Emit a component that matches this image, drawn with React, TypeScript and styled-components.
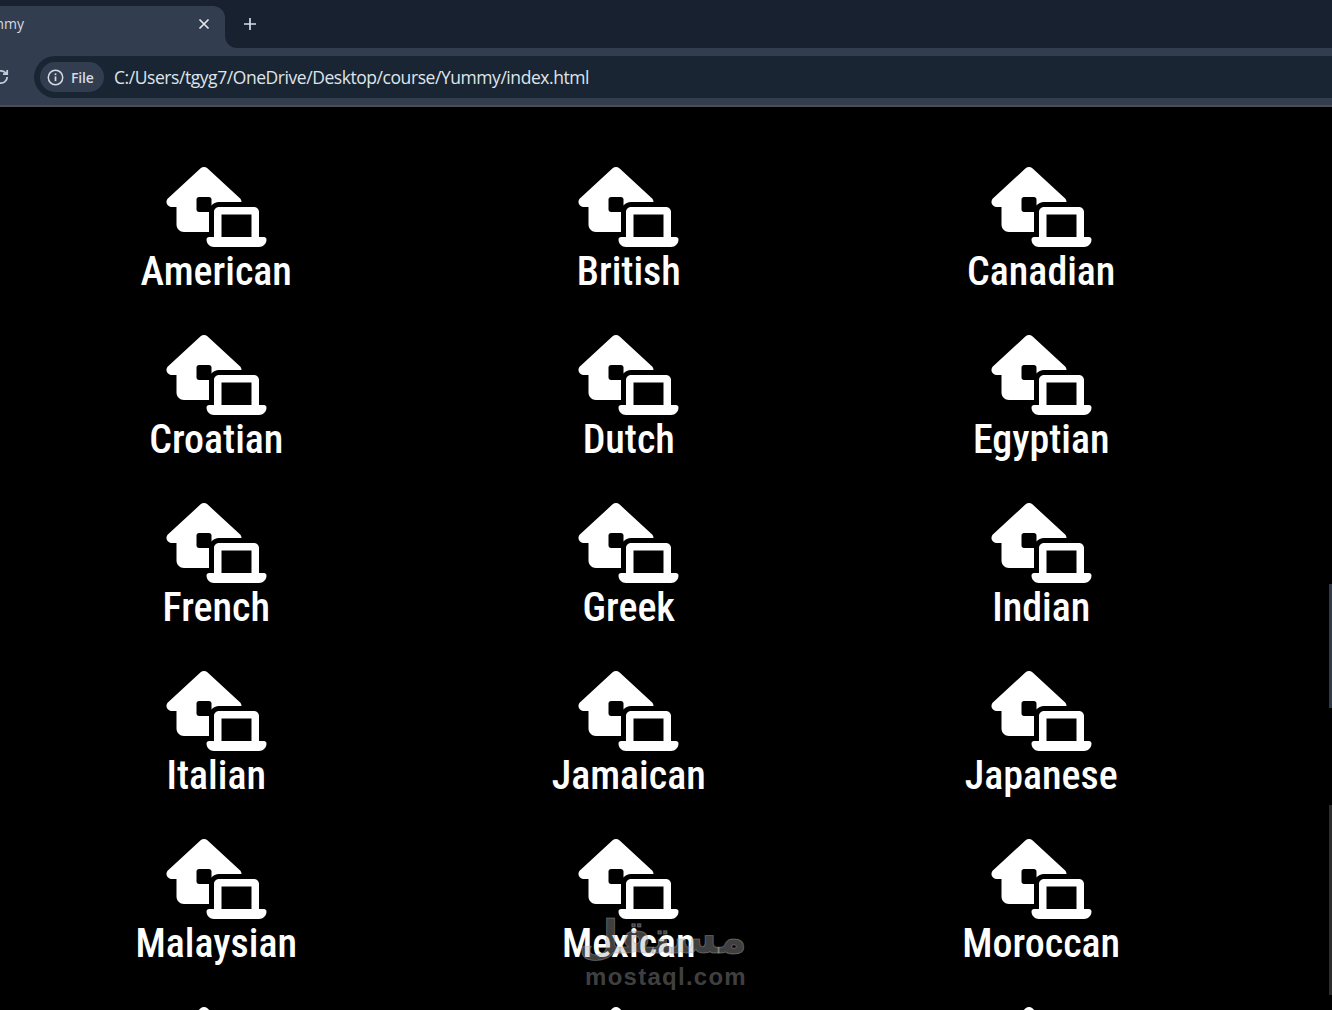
import React from "react";
import styled, { createGlobalStyle } from "styled-components";
import { FaHouseLaptop } from "react-icons/fa6";

const Global = createGlobalStyle`
  html, body { margin: 0; padding: 0; background: #000; height: 100%; overflow: hidden; }
  #root { height: 1010px; overflow: hidden; position: relative; }
`;

const Browser = styled.div`
  height: 107px;
  display: flex;
  flex-direction: column;
  background: #323e4f;
  font-family: "Liberation Sans", Arial, sans-serif;
  border-bottom: 2px solid #4a4e54;
  box-sizing: border-box;
`;

const TabStrip = styled.div`
  height: 48px;
  background: #17212f;
  display: flex;
  flex: none;
`;

const Tab = styled.div`
  width: 225px;
  height: 42px;
  margin-top: 6px;
  box-sizing: border-box;
  background: #323e4f;
  border-top-right-radius: 12px;
  display: flex;
  align-items: center;
  justify-content: space-between;
  padding: 0 14px 6px 0;
  flex: none;
  overflow: hidden;
`;

const TabTitle = styled.span`
  margin: -2px 0 0 -9px;
  font: 400 14px "Open Sans", sans-serif;
  color: #d5dbe3;
`;

const IconSlot = styled.svg`
  display: block;
  flex: none;
`;

const StripRest = styled.div`
  flex: 1;
  position: relative;
  padding: 17px 0 0 18px;
  box-sizing: border-box;

  &::before {
    content: "";
    position: absolute;
    left: 0;
    bottom: 0;
    width: 12px;
    height: 12px;
    background: radial-gradient(circle at 100% 0, transparent 11.5px, #323e4f 12.5px);
  }
`;

const Toolbar = styled.div`
  height: 42px;
  margin-top: 8px;
  display: flex;
  align-items: center;
  flex: none;
`;

const Reload = styled.div`
  width: 34px;
  flex: none;
  margin-left: -8px;
  margin-right: 8px;
`;

const Omnibox = styled.div`
  flex: 1;
  height: 42px;
  display: flex;
  align-items: center;
  padding-left: 6px;
  border-radius: 21px 0 0 21px;
  background: #1a2533;
`;

const Chip = styled.div`
  height: 30px;
  width: 64px;
  box-sizing: border-box;
  background: #323e4f;
  border-radius: 15px;
  display: flex;
  align-items: center;
  gap: 7px;
  padding-left: 7px;
  color: #d5dbe3;
  font: 600 14px "Open Sans", sans-serif;
  letter-spacing: -0.2px;
`;

const Url = styled.div`
  margin-left: 10px;
  color: #dfe4ea;
  font: 400 17.5px "Open Sans", "Liberation Sans", sans-serif;
  letter-spacing: -0.44px;
  white-space: nowrap;
`;

const Grid = styled.div`
  display: grid;
  grid-template-columns: repeat(3, 412.5px);
  grid-auto-rows: 168px;
  padding: 60px 0 0 10px;
  background: #000;
`;

const Cell = styled.div`
  display: flex;
  flex-direction: column;
  align-items: center;
  color: #fff;
`;

const HouseIcon = styled(FaHouseLaptop)`
  width: 101px;
  height: 80px;
  display: block;
  flex: none;
  color: #fff;
`;

const Name = styled.h2`
  margin: 1px 0 0;
  font: 500 40px/48px Roboto, "Liberation Sans", sans-serif;
  font-stretch: condensed;
  color: #fff;
  white-space: nowrap;
`;

const Scroll = styled.div<{ $top: number; $height: number; $color: string }>`
  position: absolute;
  right: 0;
  width: 3px;
  top: ${(p) => p.$top}px;
  height: ${(p) => p.$height}px;
  background: ${(p) => p.$color};
`;

const Watermark = styled.div`
  position: absolute;
  left: 585px;
  top: 910px;
  width: 162px;
  text-align: center;
  color: rgba(170, 170, 170, 0.4);
  pointer-events: none;
`;

const WatermarkArabic = styled.div`
  font: 700 46px/54px "DejaVu Sans", sans-serif;
  -webkit-text-stroke: 1px rgba(170, 170, 170, 0.4);
`;

const WatermarkLatin = styled.div`
  font: 700 24px/26px "Liberation Sans", sans-serif;
  letter-spacing: 1.25px;
`;

const names = [
  "American", "British", "Canadian",
  "Croatian", "Dutch", "Egyptian",
  "French", "Greek", "Indian",
  "Italian", "Jamaican", "Japanese",
  "Malaysian", "Mexican", "Moroccan",
  "Polish", "Portuguese", "Russian",
];

export default function App() {
  return (
    <>
      <Global />
      <Browser>
        <TabStrip>
          <Tab>
            <TabTitle>mmy</TabTitle>
            <IconSlot width="14" height="14" viewBox="0 0 14 14" fill="none" stroke="#e3e7ec" strokeWidth="1.7">
              <path d="M2.5 2.5l9 9M11.5 2.5l-9 9" />
            </IconSlot>
          </Tab>
          <StripRest>
            <IconSlot width="14" height="14" viewBox="0 0 14 14" fill="none" stroke="#d5dbe3" strokeWidth="1.7">
              <path d="M7 1v12M1 7h12" />
            </IconSlot>
          </StripRest>
        </TabStrip>
        <Toolbar>
          <Reload>
            <IconSlot width="18" height="18" viewBox="0 0 16 16" fill="none" stroke="#c4ccd6" strokeWidth="1.6">
              <path d="M13.5 8a5.5 5.5 0 1 1-1.6-3.9L13.5 5.5M13.5 1.8v3.7H9.8" />
            </IconSlot>
          </Reload>
          <Omnibox>
            <Chip>
              <IconSlot width="17" height="17" viewBox="0 0 16 16" fill="none" stroke="#d5dbe3" strokeWidth="1.4">
                <circle cx="8" cy="8" r="6.8" />
                <path d="M8 7v4.4" strokeWidth="1.6" />
                <path d="M8 4.2v1.6" strokeWidth="1.6" />
              </IconSlot>
              File
            </Chip>
            <Url>C:/Users/tgyg7/OneDrive/Desktop/course/Yummy/index.html</Url>
          </Omnibox>
        </Toolbar>
      </Browser>
      <Grid>
        {names.map((n) => (
          <Cell key={n}>
            <HouseIcon />
            <Name>{n}</Name>
          </Cell>
        ))}
      </Grid>
      <Scroll $top={584} $height={124} $color="#2f3b4a" />
      <Scroll $top={805} $height={190} $color="#2c2c2c" />
      <Watermark>
        <WatermarkArabic dir="rtl">مستقل</WatermarkArabic>
        <WatermarkLatin>mostaql.com</WatermarkLatin>
      </Watermark>
    </>
  );
}
